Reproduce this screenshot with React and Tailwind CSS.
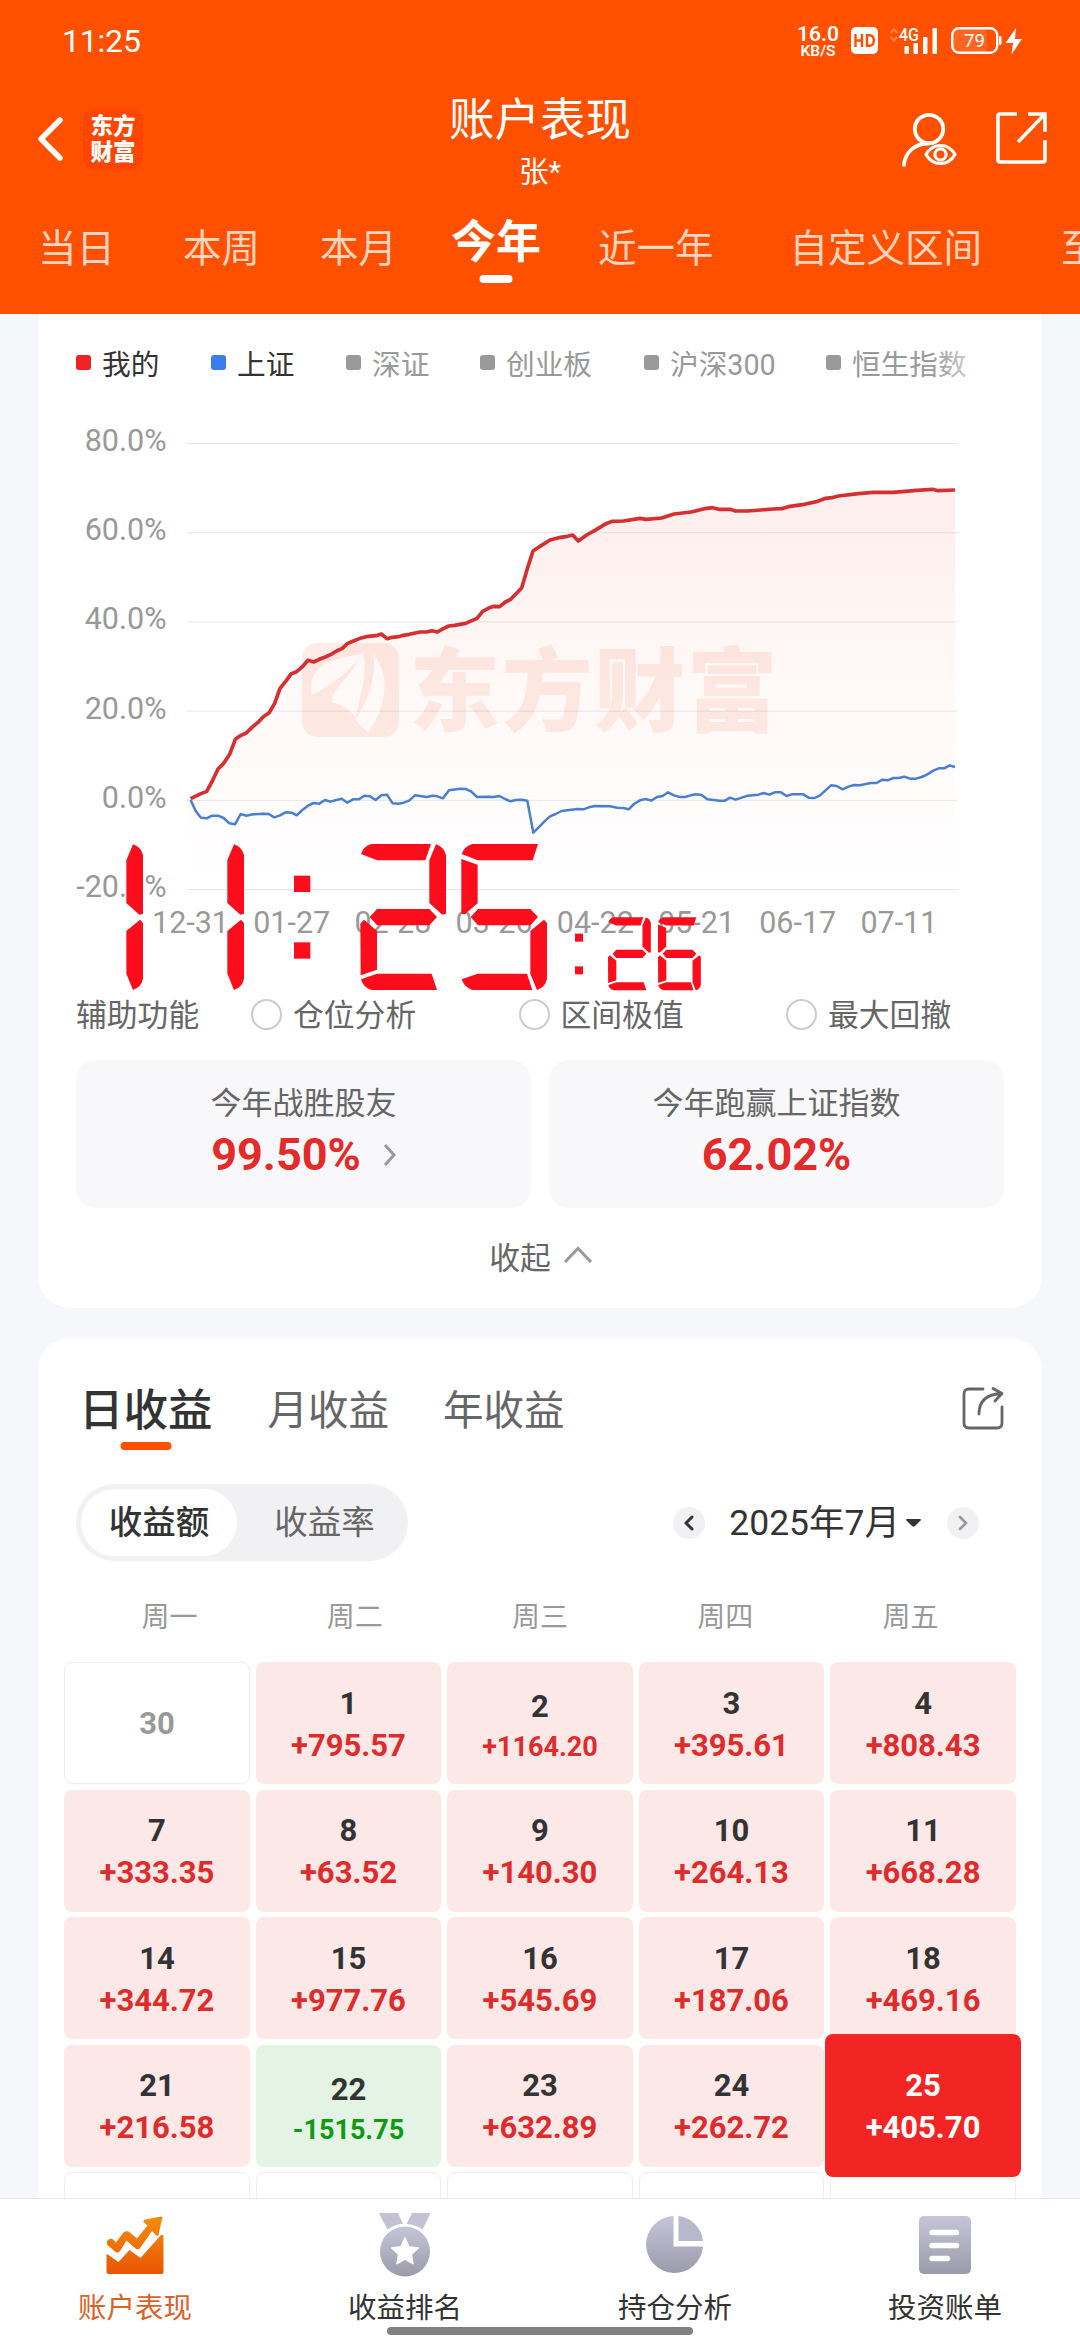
import React from 'react';
import clsx from 'clsx';

const RANGES = [
  { label: '当日', cls: 'ml-[38px]' },
  { label: '本周', cls: 'ml-[68px]' },
  { label: '本月', cls: 'ml-[60px]' },
  { label: '今年', cls: 'ml-[54px]', active: true },
  { label: '近一年', cls: 'ml-[57px]' },
  { label: '自定义区间', cls: 'ml-[76px]' },
  { label: '至今', cls: 'ml-[79px]' },
];

const LEGEND = [
  { label: '我的', dot: 'bg-[#f02323]', text: 'text-[#333]', w: 'w-[135px]' },
  { label: '上证', dot: 'bg-[#3a7eee]', text: 'text-[#333]', w: 'w-[135px]' },
  { label: '深证', dot: 'bg-[#999]', text: 'text-[#999]', w: 'w-[134px]' },
  { label: '创业板', dot: 'bg-[#999]', text: 'text-[#999]', w: 'w-[164px]' },
  { label: '沪深300', dot: 'bg-[#999]', text: 'text-[#999]', w: 'w-[182px]' },
  { label: '恒生指数', dot: 'bg-[#999]', text: 'text-[#999]', w: 'w-[142px]' },
];

const Y_TICKS = ['80.0%', '60.0%', '40.0%', '20.0%', '0.0%', '-20.0%'];
const X_TICKS = ['12-31', '01-27', '02-28', '03-26', '04-22', '05-21', '06-17', '07-11'];

const MINE =
  '452,476 483,461 500,454 517,423 534,387 551,370 569,343 586,298 603,286 619,279 636,262 653,248 670,230 687,219 704,190 720,145 737,124 754,101 770,95 787,80 804,61 821,66 838,58 856,51 873,43 890,33 907,25 922,11 940,3 960,-5 985,-11 1008,-13 1024,-18 1041,-4 1058,-8 1075,-10 1090,-14 1108,-17 1140,-24 1160,-24 1176,-28 1192,-24 1210,-34 1226,-42 1243,-44 1277,-50 1311,-65 1328,-86 1345,-95 1361,-101 1379,-100 1396,-114 1412,-122 1445,-156 1462,-214 1479,-267 1500,-281 1530,-300 1562,-308 1582,-311 1598,-315 1615,-297 1640,-315 1665,-329 1698,-349 1716,-356 1750,-357 1800,-365 1818,-362 1865,-366 1902,-378 1953,-384 2000,-395 2018,-397 2036,-392 2070,-392 2086,-387 2122,-387 2200,-393 2225,-394 2245,-400 2287,-406 2333,-416 2357,-425 2375,-427 2395,-432 2455,-439 2500,-443 2560,-443 2630,-449 2678,-452 2694,-448 2745,-450';

const INDEX =
  '452,480 467,513 483,533 500,535 516,527 534,527 551,534 568,550 585,553 602,522 618,527 640,523 670,521 686,522 703,532 720,526 737,517 755,518 770,526 787,510 804,497 821,489 838,491 855,480 871,485 889,480 905,476 922,488 939,478 957,478 973,467 990,469 1007,480 1024,466 1041,464 1058,490 1075,491 1091,488 1107,482 1125,466 1160,471 1177,467 1192,469 1209,475 1227,451 1260,446 1277,447 1293,454 1311,471 1345,470 1361,471 1378,468 1395,477 1412,484 1428,480 1445,479 1462,482 1480,578 1496,562 1513,545 1530,529 1547,522 1565,513 1612,507 1630,508 1647,502 1664,498 1710,499 1732,503 1750,504 1766,508 1782,492 1800,481 1817,477 1834,482 1851,471 1868,468 1884,457 1902,466 1919,471 1935,471 1952,466 1968,463 1985,465 2002,478 2040,482 2055,482 2070,473 2087,479 2123,467 2155,464 2171,459 2188,464 2204,457 2223,457 2240,468 2255,463 2290,463 2306,473 2324,474 2340,466 2373,436 2390,438 2408,448 2425,440 2442,435 2460,436 2492,429 2510,429 2527,419 2543,421 2560,414 2575,414 2593,410 2610,416 2628,416 2645,411 2662,403 2680,392 2696,385 2713,385 2729,376 2745,381';

const WEEKDAYS = ['周一', '周二', '周三', '周四', '周五'];

const DAYS = [
  { d: 30 },
  { d: 1, v: '+795.57' },
  { d: 2, v: '+1164.20' },
  { d: 3, v: '+395.61' },
  { d: 4, v: '+808.43' },
  { d: 7, v: '+333.35' },
  { d: 8, v: '+63.52' },
  { d: 9, v: '+140.30' },
  { d: 10, v: '+264.13' },
  { d: 11, v: '+668.28' },
  { d: 14, v: '+344.72' },
  { d: 15, v: '+977.76' },
  { d: 16, v: '+545.69' },
  { d: 17, v: '+187.06' },
  { d: 18, v: '+469.16' },
  { d: 21, v: '+216.58' },
  { d: 22, v: '-1515.75' },
  { d: 23, v: '+632.89' },
  { d: 24, v: '+262.72' },
  { d: 25, v: '+405.70', selected: true },
  {}, {}, {}, {}, {},
];

function StatusBar() {
  return (
    <div className="flex h-[80px] items-start justify-between pl-[62px] pr-[57px] text-white">
      <span className="mt-[21px] text-[32px] leading-10 tracking-[-0.2px]">11:25</span>
      <div className="mt-[26px] flex items-start">
        <div className="flex w-[38px] flex-col items-center">
          <span className="text-[21px] font-semibold leading-[17px]">16.0</span>
          <span className="mt-px text-[15.5px] font-semibold leading-[15px]">KB/S</span>
        </div>
        <svg className="ml-[14px] mt-px" width="27" height="27" viewBox="0 0 27 27">
          <rect width="27" height="27" rx="5" fill="#fff" />
          <path d="M4.500 7v13M11 7v13M4.500 13.500H11M16 8.200v10.600h2.500c3 0 4.300-2 4.300-5.300s-1.300-5.300-4.300-5.300z" fill="none" stroke="#ff5000" strokeWidth="2.400" />
        </svg>
        <svg className="ml-[11px] mt-px overflow-visible" width="49" height="28" viewBox="0 0 49 28">
          <path d="M1.500 6 5 2.500 8.500 6M1.500 10 5 13.500 8.500 10" fill="none" stroke="#fff" strokeOpacity=".3" strokeWidth="2" />
          <text x="10" y="14" fontSize="17.500" textLength="20" lengthAdjust="spacingAndGlyphs" fill="#fff" className="font-medium">4G</text>
          <g fill="#fff">
            <rect x="15.500" y="19" width="4.500" height="8" rx="1" />
            <rect x="24.500" y="16" width="4.500" height="11" rx="1" />
            <rect x="34" y="10" width="4.500" height="17" rx="1" />
            <rect x="43.500" y="1" width="4.500" height="26" rx="1" />
          </g>
        </svg>
        <svg className="ml-[13px] mt-px" width="72" height="28" viewBox="0 0 72 28">
          <rect x="2" y="2" width="34" height="23" rx="5" fill="#fff" fillOpacity=".12" />
          <rect x="1.200" y="1.200" width="45" height="24.600" rx="7" fill="none" stroke="#fff" strokeWidth="2.400" />
          <rect x="48" y="9" width="2.500" height="9" rx="1" fill="#fff" />
          <text x="23.500" y="20" textAnchor="middle" fontSize="18.500" fill="#fff">79</text>
          <path d="M65 1 54.500 16H62l-1.500 11.500L71 12h-7z" fill="#fff" />
        </svg>
      </div>
    </div>
  );
}

function Header() {
  return (
    <header className="h-[314px] shrink-0 overflow-hidden bg-[#ff5000] text-white">
      <StatusBar />
      <div className="relative flex h-[120px] items-start justify-between pl-[36px] pr-[32px]">
        <div className="flex items-center pt-[28px]">
          <svg width="28" height="46" viewBox="0 0 28 46" fill="none" stroke="#fff" strokeWidth="5.500" strokeLinecap="round" strokeLinejoin="round">
            <path d="M24 4 5 23 24 42" />
          </svg>
          <div className="ml-[19px] flex h-[62px] w-[60px] flex-col items-center justify-center rounded-[13px] bg-[#ff4600] text-[22.5px] font-black leading-[26px]">
            <span>东方</span>
            <span>财富</span>
          </div>
        </div>
        <div className="absolute inset-x-0 top-[13px] flex flex-col items-center">
          <h1 className="text-[45.5px] leading-[56px]">账户表现</h1>
          <span className="mt-[3px] text-[29.5px] leading-[40px]">张*</span>
        </div>
        <div className="flex gap-[38px] pt-[32px]">
          <svg width="57" height="56" viewBox="0 0 57 56" fill="none" stroke="#fff" strokeWidth="3.800">
            <circle cx="28" cy="17" r="14.200" />
            <path d="M3 53C4 40 14 31.500 28 31.500" strokeLinecap="round" />
            <path d="M25 42.500C32 30.500 47 30.500 54 42.500 47 54.500 32 54.500 25 42.500z" strokeWidth="3.200" strokeLinejoin="round" />
            <circle cx="39.500" cy="42.500" r="5.600" strokeWidth="3.200" />
          </svg>
          <svg width="52" height="52" viewBox="0 0 52 52" fill="none" stroke="#fff" strokeWidth="3.600">
            <path d="M21 2H4Q2 2 2 4V48Q2 50 4 50H47Q49 50 49 48V28" />
            <path d="M32 2H49V20M49 2 22 30" />
          </svg>
        </div>
      </div>
      <nav className="flex h-[98px] w-[1200px] items-center">
        {RANGES.map((r) => (
          <span
            key={r.label}
            className={clsx(
              'relative whitespace-nowrap',
              r.cls,
              r.active ? '-mt-3 text-[45px] font-bold' : 'text-[38.5px] text-[#ffd3bd]'
            )}
          >
            {r.label}
            {r.active && <i className="absolute -bottom-[6px] left-1/2 h-2 w-[33px] -translate-x-1/2 rounded-full bg-white" />}
          </span>
        ))}
      </nav>
    </header>
  );
}

// one slanted seven-segment digit, 258 x 439 units
const SEG = {
  top: 'M33 0H212L195 49H50L2 30Q9 7 33 0z',
  topOpen: 'M33 0H230L214 49H49L1 30Q9 7 33 0z',
  ur: 'M227 1Q252 9 257 34V209L246 212 207 177V49z',
  ul: 'M0 45 49 62V177L11 211 0 209z',
  mid: 'M50 195H207L230 219 207 244H50L28 219z',
  lr: 'M248 227 257 237V404Q252 429 227 438L207 389V261z',
  ll: 'M0 239 11 227 50 261V377L1 394z',
  bottom: 'M2 406 50 389H214L230 438H33Q9 431 2 406z',
  bottomCut: 'M1 406 49 389H197L213 438H33Q9 431 1 406z',
};

const DIGITS = {
  1: ['ur', 'lr'],
  2: ['top', 'ur', 'mid', 'll', 'bottom'],
  5: ['topOpen', 'ul', 'mid', 'lr', 'bottomCut'],
  6: ['topOpen', 'ul', 'mid', 'll', 'lr', 'bottomCut'],
};

function Digit({ n, x, y = 0, scale = 1, mirror = false }) {
  return (
    <g transform={`translate(${x} ${y}) scale(${scale})`}>
      {DIGITS[n].map((s) => (
        <path key={s} d={SEG[s]} />
      ))}
    </g>
  );
}

function FloatingClock() {
  return (
    <svg className="absolute left-[88px] top-[530px]" width="577" height="147" viewBox="258 611 1731 441" fill="#fc0d1b">
      <Digit n={1} x={52} y={611} />
      <Digit n={1} x={355} y={611} />
      <rect x="762" y="706" width="49" height="49" />
      <rect x="762" y="906" width="49" height="49" />
      <Digit n={2} x={961} y={611} />
      <Digit n={5} x={1264} y={611} />
      <rect x="1605" y="880" width="24" height="24" />
      <rect x="1605" y="978" width="24" height="24" />
      <Digit n={2} x={1704} y={831} scale={0.5} />
      <Digit n={6} x={1854} y={831} scale={0.5} />
    </svg>
  );
}

function Chart() {
  return (
    <svg className="block" width="1004" height="535" viewBox="38 410 1004 535">
      <defs>
        <linearGradient id="area" x1="0" y1="0" x2="0" y2="1">
          <stop offset="0" stopColor="#f02323" stopOpacity=".08" />
          <stop offset=".5" stopColor="#f04a23" stopOpacity=".035" />
          <stop offset="1" stopColor="#f02323" stopOpacity="0" />
        </linearGradient>
      </defs>
      {Y_TICKS.map((t, i) => (
        <g key={t}>
          <rect x="187" y={443 + i * 89.2} width="771" height="1" fill="#e6e6ea" />
          <text x="166.500" y={451 + i * 89.2} textAnchor="end" fontSize="30.500" fill="#999">{t}</text>
        </g>
      ))}
      <g transform="translate(40 640) scale(.33333)">
        <polygon points={`452,740 ${MINE} 2745,740`} fill="url(#area)" />
        <g opacity=".1">
          <rect x="786" y="9" width="291" height="282" rx="46" fill="#f5501e" />
          <path d="M815 164C806 80 850 62 965 42 930 100 840 155 815 164z" fill="#fff" />
          <path d="M968 28C985 110 960 160 948 232 930 215 915 195 878 188 865 150 945 110 968 28z" fill="#fff" />
          <path d="M1000 42C1060 120 1030 210 985 278 970 262 958 255 946 238 985 180 1010 110 1000 42z" fill="#fff" />
          <text x="1108" y="252" fontSize="272" textLength="1104" fill="#f5501e" className="font-black">东方财富</text>
        </g>
        <polyline points={INDEX} fill="none" stroke="#4a7fd0" strokeWidth="7.500" strokeLinejoin="round" />
        <polyline points={MINE} fill="none" stroke="#d62f30" strokeWidth="11" strokeLinejoin="round" />
      </g>
      {X_TICKS.map((t, i) => (
        <text key={t} x={190.5 + i * 101.2} y="933" textAnchor="middle" fontSize="30.500" fill="#999">{t}</text>
      ))}
    </svg>
  );
}

function PerformanceCard() {
  return (
    <section className="relative mx-[38px] h-[994px] shrink-0 rounded-b-[32px] bg-white">
      <div className="relative flex h-[96px] items-center pl-[38px] pt-[7px] text-[28.7px]">
        {LEGEND.map((l) => (
          <div key={l.label} className={clsx('flex shrink-0 items-center gap-[11px] whitespace-nowrap', l.w, l.text)}>
            <i className={clsx('-mt-1.5 size-[15px] rounded-[3px]', l.dot)} />
            {l.label}
          </div>
        ))}
        <div className="absolute right-[60px] top-6 h-12 w-[50px] bg-linear-to-r from-white/0 to-white/70" />
      </div>
      <Chart />
      <div className="mt-[48px] flex h-[44px] items-center pl-[38px] text-[30.8px] text-[#666]">
        <span className="w-[175px] shrink-0 pt-0.5">辅助功能</span>
        {['仓位分析', '区间极值', '最大回撤'].map((o) => (
          <label key={o} className="flex w-[267.5px] shrink-0 items-center gap-[11px]">
            <i className="-mt-0.5 size-[31px] rounded-full border-[2.5px] border-[#ccc]" />
            <span className="pt-0.5">{o}</span>
          </label>
        ))}
      </div>
      <div className="mx-[38px] mt-[23px] grid grid-cols-2 gap-[18px] text-center">
        <div className="h-[148px] rounded-[20px] bg-[#f8f8fa] pt-[22px]">
          <p className="text-[31px] leading-[44px] text-[#666]">今年战胜股友</p>
          <div className="flex items-center justify-center gap-[22px] pl-px text-[45px] font-bold leading-[57px] text-[#e52a2a]">
            99.50%
            <svg width="14" height="24" viewBox="0 0 14 24" fill="none" stroke="#999" strokeWidth="3">
              <path d="M2 2 11 12 2 22" />
            </svg>
          </div>
        </div>
        <div className="h-[148px] rounded-[20px] bg-[#f8f8fa] pt-[22px]">
          <p className="text-[31px] leading-[44px] text-[#666]">今年跑赢上证指数</p>
          <div className="text-[45px] font-bold leading-[57px] text-[#e52a2a]">62.02%</div>
        </div>
      </div>
      <div className="mt-[29px] flex h-[44px] items-center justify-center gap-3 pl-0.5 text-[30.8px] text-[#666]">
        收起
        <svg className="-mt-2" width="30" height="20" viewBox="0 0 30 20" fill="none" stroke="#999" strokeWidth="3">
          <path d="M2 17 15 3.500 28 17" />
        </svg>
      </div>
      <FloatingClock />
    </section>
  );
}

function DayCell({ day }) {
  const { d, v, selected } = day;
  if (!v) {
    return (
      <div className="flex items-center justify-center rounded-[8px] border border-[#eee] pt-[3px] text-[31px] font-bold text-[#999]">
        {d}
      </div>
    );
  }
  const loss = v.startsWith('-');
  const long = v.length > 7;
  return (
    <div
      className={clsx(
        'relative flex flex-col items-center justify-center rounded-[8px] pt-[3px] font-bold',
        selected ? 'z-10 -mx-[5px] -my-[10.5px] bg-[#f32424] text-white' : loss ? 'bg-[#e3f4e5]' : 'bg-[#fde8e8]'
      )}
    >
      <span className={clsx('text-[31px] leading-[42px]', long && 'mt-[3px]', !selected && 'text-[#333]')}>{d}</span>
      <span
        className={clsx(
          long ? 'text-[27px] leading-[38px]' : 'text-[31px] leading-[42px]',
          !selected && (loss ? 'text-[#0f9a12]' : 'text-[#dd2c2c]')
        )}
      >
        {v}
      </span>
    </div>
  );
}

function IncomeCard() {
  return (
    <section className="mx-[38px] mt-[30px] h-[1000px] shrink-0 rounded-t-[32px] bg-white">
      <div className="flex h-[117px] items-end justify-between pl-[41px] pr-[37px]">
        <div className="flex items-center pb-[11px] text-[40.5px] leading-[66px] text-[#666]">
          <span className="relative text-[44.5px] font-medium text-[#333]">
            日收益
            <i className="absolute -bottom-[6px] left-1/2 h-2 w-[51px] -translate-x-1/2 rounded-full bg-[#ff5000]" />
          </span>
          <span className="ml-[55px]">月收益</span>
          <span className="ml-[54px]">年收益</span>
        </div>
        <svg className="mb-[25px]" width="44" height="44" viewBox="0 0 44 44" fill="none" stroke="#666" strokeWidth="2.800" strokeLinecap="round" strokeLinejoin="round">
          <path d="M22 3H8Q3 3 3 8V37Q3 42 8 42H36Q41 42 41 37V21" />
          <path d="M18 28C18 14 26 8 41 7.500M32 2.500 41 7.500 34 15" />
        </svg>
      </div>
      <div className="mt-[29px] flex items-center justify-between pl-[38px] pr-[63px]">
        <div className="flex h-[77px] w-[332px] items-center rounded-full bg-[#f1f1f4] p-[5px] text-[33.5px]">
          <span className="flex h-full w-[156px] items-center justify-center rounded-full bg-white pt-0.5 font-medium text-[#333]">收益额</span>
          <span className="flex-1 pl-[9px] pt-0.5 text-center text-[#666]">收益率</span>
        </div>
        <div className="flex items-center">
          <span className="flex size-[32px] items-center justify-center rounded-full bg-[#f1f1f4]">
            <svg width="10" height="16" viewBox="0 0 10 16" fill="none" stroke="#333" strokeWidth="3" strokeLinecap="round">
              <path d="M8 2 2 8 8 14" />
            </svg>
          </span>
          <span className="ml-[24px] pt-[3px] text-[35.5px] text-[#333]">2025年7月</span>
          <svg className="ml-[6px]" width="15" height="8" viewBox="0 0 15 8" fill="#333">
            <path d="M1 0H14Q15.500 0 14.500 1.500L9 7Q7.500 8 6 7L.5 1.500Q-.5 0 1 0z" />
          </svg>
          <span className="ml-[26px] flex size-[32px] items-center justify-center rounded-full bg-[#f1f1f4]">
            <svg width="10" height="16" viewBox="0 0 10 16" fill="none" stroke="#999" strokeWidth="2.600" strokeLinecap="round">
              <path d="M2 2 8 8 2 14" />
            </svg>
          </span>
        </div>
      </div>
      <div className="mx-[39px] mt-[35px] grid h-[44px] grid-cols-5 items-center text-center text-[28px] text-[#999]">
        {WEEKDAYS.map((w) => (
          <span key={w}>{w}</span>
        ))}
      </div>
      <div className="mx-[26px] mt-[22px] grid auto-rows-[122px] grid-cols-5 gap-[5.6px]">
        {DAYS.map((day, i) => (
          <DayCell key={i} day={day} />
        ))}
      </div>
    </section>
  );
}

function StarMedal() {
  return (
    <svg width="52" height="64" viewBox="0 0 52 64">
      <path d="M1 0H19L24 10.500Q14 12 8.500 16.500L.5 1.500Q0 0 1 0zM33 0H50Q51.500 0 51 1.500L43.500 16.500Q37 11.500 27.500 11z" fill="#c3c2d4" />
      <circle cx="26" cy="38.500" r="25" fill="url(#grey)" />
      <path d="m26 25 3.900 8.700 9.300 1.200-6.900 6.500 1.700 9.300-8-4.500-8 4.500 1.700-9.300-6.900-6.500 9.300-1.200z" fill="#fff" stroke="#fff" strokeWidth="1.500" strokeLinejoin="round" />
    </svg>
  );
}

function BottomNav() {
  const items = [
    {
      label: '账户表现',
      active: true,
      icon: (
        <svg width="58" height="58" viewBox="0 0 58 58" fill="url(#orange)">
          <path d="M56.500 1 52.500 19Q51.500 21 50 19L46 15 34 32Q31.500 34.500 29 32L20.500 24.500 14 35Q11.500 38 8.500 35L2 29.500Q-.5 26.500 2 24 5 21.500 7.500 24L10 26.500 17.500 16.500Q20.500 14 24 16.500L31 22.500 41.500 9.500 37.500 6Q37 3.500 39.500 3.500L55 .5z" />
          <path d="M1 38 12.500 46 23.500 34 34.500 42 54.500 19.500Q57.500 17.500 57.500 21V56Q57.500 58 55.500 58H2.500Q.5 58 .5 56V38.500z" />
        </svg>
      ),
    },
    { label: '收益排名', icon: <StarMedal /> },
    {
      label: '持仓分析',
      icon: (
        <svg width="58" height="60" viewBox="0 0 58 60" fill="url(#grey)">
          <path d="M27.500 1V31.500H57A28.500 28.500 0 1 1 27.500 1z" />
          <path d="M32.500 1A28 28 0 0 1 57 26H32.500z" fill="#b9b8cb" />
        </svg>
      ),
    },
    {
      label: '投资账单',
      icon: (
        <svg width="52" height="58" viewBox="0 0 52 58">
          <rect width="52" height="58" rx="5" fill="url(#grey)" />
          <path d="M13 16.500H37.500M13 29.500H37.500M13 42.500H28.500" stroke="#fff" strokeWidth="5.400" strokeLinecap="round" />
        </svg>
      ),
    },
  ];

  return (
    <footer className="relative z-20 h-[142px] shrink-0 border-t border-[#e8e8ea] bg-white">
      <svg className="absolute size-0">
        <defs>
          <linearGradient id="grey" x1="0" y1="0" x2="0" y2="1">
            <stop offset="0" stopColor="#c6c5d7" />
            <stop offset="1" stopColor="#9c9bac" />
          </linearGradient>
          <linearGradient id="orange" gradientUnits="userSpaceOnUse" x1="0" y1="0" x2="0" y2="58">
            <stop offset="0" stopColor="#f58f0c" />
            <stop offset="1" stopColor="#e95504" />
          </linearGradient>
        </defs>
      </svg>
      <div className="grid h-full grid-cols-4">
        {items.map((it) => (
          <div key={it.label} className="flex flex-col items-center pt-[14px]">
            <div className="flex h-[64px] items-center">{it.icon}</div>
            <span className={clsx('mt-[12px] text-[28.5px] leading-[40px]', it.active ? 'text-[#d9622b]' : 'text-[#333]')}>
              {it.label}
            </span>
          </div>
        ))}
      </div>
      <div className="absolute bottom-[5px] left-1/2 h-2 w-[306px] -translate-x-1/2 rounded-full bg-[#808080]" />
    </footer>
  );
}

export default function App() {
  return (
    <div className="flex h-[2340px] w-[1080px] flex-col overflow-hidden bg-[#f6f7fa] font-['Roboto','Noto_Sans_CJK_SC',sans-serif]">
      <Header />
      <main className="flex min-h-0 flex-1 flex-col overflow-hidden">
        <PerformanceCard />
        <IncomeCard />
      </main>
      <BottomNav />
    </div>
  );
}
